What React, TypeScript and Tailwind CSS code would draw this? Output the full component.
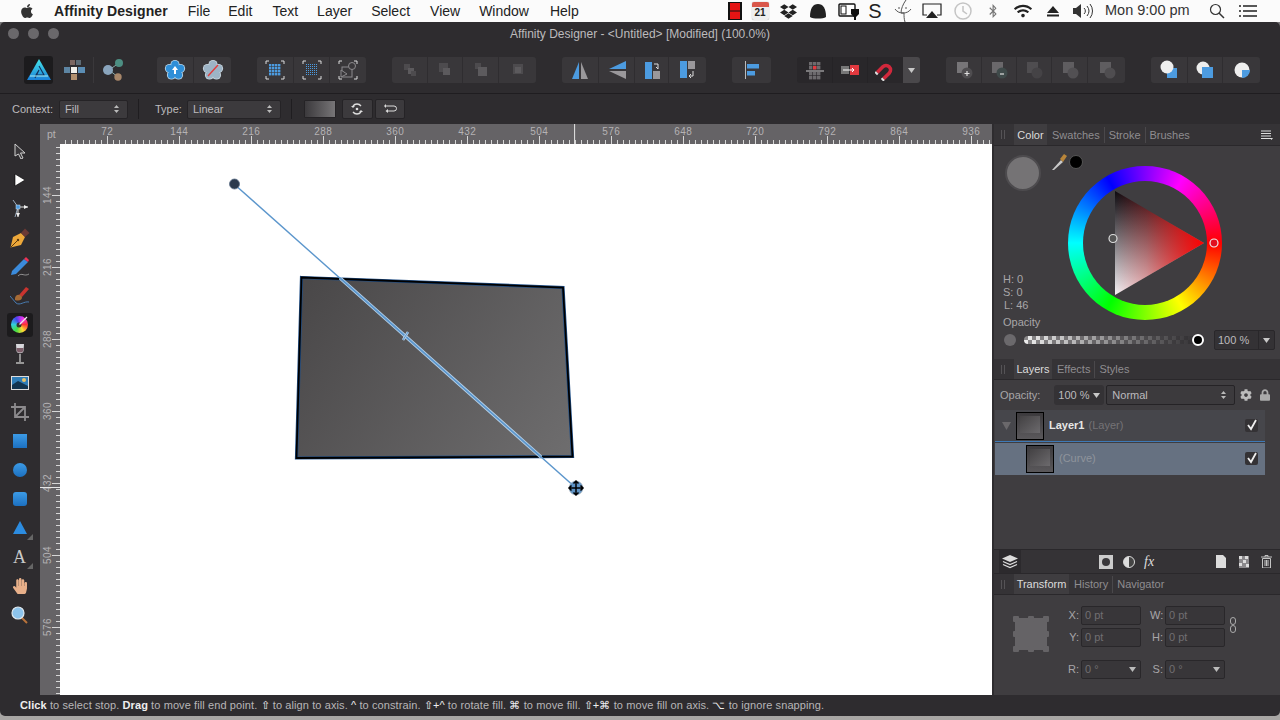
import React from "react";
import { FaApple, FaDropbox, FaWifi, FaBluetoothB, FaHandPaper, FaCog, FaLock } from "react-icons/fa";

const Sel = ({ className = "", label }: { className?: string; label: string }) => (
  <div className={"flex items-center justify-between rounded-[2px] border border-[#252326] bg-[#3c3a3d] pl-[5px] pr-[8px] text-[#bdbbbd] " + className}>
    <span>{label}</span>
    <span className="flex flex-col gap-[2px]">
      <svg width="5" height="3"><path d="M0 3L2.5 0L5 3Z" fill="#bbb" /></svg>
      <svg width="5" height="3"><path d="M0 0L2.5 3L5 0Z" fill="#bbb" /></svg>
    </span>
  </div>
);

const Caret = ({ c = "#c8c8c8" }: { c?: string }) => (
  <svg width="7" height="5"><path d="M0 0H7L3.5 5Z" fill={c} /></svg>
);

const Ico = ({ children, s = 22 }: { children: React.ReactNode; s?: number }) => (
  <svg width={s} height={s} viewBox="0 0 22 22">{children}</svg>
);

const Cell = ({ className = "", children, last }: { className?: string; children: React.ReactNode; last?: boolean }) => (
  <div className={"flex h-full items-center justify-center " + (last ? "" : "border-r border-[#2f2d30] ") + className}>{children}</div>
);

const Flower = ({ fill, stroke }: { fill: string; stroke: string }) => {
  const pts = [[11, 5.5], [16.5, 9.5], [14.5, 16], [7.5, 16], [5.5, 9.5]];
  return (
    <>
      {pts.map((p, i) => <circle key={i} cx={p[0]} cy={p[1]} r="4.6" fill={stroke} />)}
      {pts.map((p, i) => <circle key={"b" + i} cx={p[0]} cy={p[1]} r="3.7" fill={fill} />)}
      <circle cx="11" cy="11" r="5" fill={fill} />
    </>
  );
};

const Corners = () => (
  <path d="M2 5V2H5M17 2H20V5M20 17V20H17M5 20H2V17" fill="none" stroke="#ddd" strokeWidth="1" />
);

const Arrange = ({ a, b, c }: { a: [number, number, number]; b: [number, number, number]; c?: [number, number, number] }) => (
  <Ico>
    <rect x={a[0]} y={a[1]} width={a[2]} height={a[2]} fill="#4d4b4e" />
    <rect x={b[0]} y={b[1]} width={b[2]} height={b[2]} fill="#5c5a5d" />
    {c && <rect x={c[0]} y={c[1]} width={c[2]} height={c[2]} fill="#4d4b4e" />}
  </Ico>
);

const Bool = ({ sq, ci, mark }: { sq: string; ci: string; mark?: string }) => (
  <Ico>
    <rect x="4" y="3" width="11" height="11" fill={sq} />
    <circle cx="14" cy="14" r="5.5" fill={ci} />
    {mark && <path d={mark} stroke="#ddd" strokeWidth="1.2" fill="none" />}
  </Ico>
);

const Toolbar = () => (
  <div className="flex h-[50px] items-center border-b border-[#1f1d20] pl-[24px] pt-[3px]">
    <div className="flex h-[28px] w-[29px] items-center justify-center rounded-[3px] bg-[#1c1b1d]">
      <svg width="26" height="26" viewBox="0 0 26 26">
        <defs><linearGradient id="lg" x1="0" y1="0" x2="0" y2="1"><stop offset="0" stopColor="#45e6ea" /><stop offset="1" stopColor="#1a80d8" /></linearGradient></defs>
        <path d="M13 2L25 23H1Z" fill="url(#lg)" />
        <path d="M13 9L18 18H10L13 13L9 21" fill="none" stroke="#14305a" strokeWidth="1.100" />
        <path d="M4 19H22" stroke="#a9eef5" strokeWidth="1" />
      </svg>
    </div>
    <div className="ml-[11px] flex w-[22px] items-center justify-center">
      <svg width="22" height="22" viewBox="0 0 22 22">
        <rect x="6" y="1" width="5" height="5" fill="#7b6660" /><rect x="12" y="1" width="5" height="5" fill="#5c6a74" />
        <rect x="0" y="8" width="6" height="6" fill="#5d85a3" /><rect x="7" y="8" width="6" height="6" fill="#f0efe9" /><rect x="14" y="8" width="7" height="6" fill="#5b8db4" />
        <rect x="7" y="15" width="6" height="6" fill="#b18f6d" />
      </svg>
    </div>
    <div className="ml-[7px] h-[26px] w-px bg-[#3a383b]" />
    <div className="ml-[7px] flex w-[24px] items-center justify-center">
      <svg width="24" height="24" viewBox="0 0 24 24">
        <path d="M8 12L18 5M8 12L17 19" stroke="#8aa" strokeWidth="1" />
        <circle cx="7" cy="12" r="5" fill="#8aa5bd" /><circle cx="18" cy="5" r="4" fill="#4d8f83" /><circle cx="17" cy="19" r="3.7" fill="#a8876a" />
      </svg>
    </div>
    <div className="ml-[32px] flex h-[26px] w-[74px] rounded-[3px] bg-[#39373a]">
      <Cell className="w-[37px]"><Ico><Flower fill="#2f8fd8" stroke="#b9d6ea" /><path d="M11 7L14 11H12V15H10V11H8Z" fill="#fff" /></Ico></Cell>
      <Cell className="w-[37px]" last><Ico><Flower fill="#9db4c6" stroke="#c9d6df" /><path d="M6 17L16 6" stroke="#e23b3b" strokeWidth="1.4" /></Ico></Cell>
    </div>
    <div className="ml-[26px] flex h-[26px] w-[109px] rounded-[3px] bg-[#39373a]">
      <Cell className="w-[37px]"><Ico><Corners />{[5, 8, 11, 14].flatMap((x) => [5, 8, 11, 14].map((y) => <rect key={x + "-" + y} x={x} y={y} width="2.4" height="2.4" fill="#4c9be0" />))}</Ico></Cell>
      <Cell className="w-[36px]"><Ico><Corners />{[5, 7, 9, 11, 13, 15].flatMap((x) => [5, 7, 9, 11, 13, 15].map((y) => <rect key={x + "-" + y} x={x} y={y} width="1" height="1" fill="#4c9be0" />))}</Ico></Cell>
      <Cell className="w-[36px]" last><Ico><Corners /><rect x="5" y="8" width="10" height="10" fill="none" stroke="#8c8a8d" /><circle cx="15" cy="7" r="3.5" fill="#39373a" stroke="#8c8a8d" /><path d="M4 11L10 15L4 18Z" fill="#39373a" stroke="#8c8a8d" /></Ico></Cell>
    </div>
    <div className="ml-[26px] flex h-[26px] w-[144px] rounded-[3px] bg-[#39373a]">
      <Cell className="w-[36px]"><Arrange a={[5, 5, 6]} b={[9, 9, 6]} c={[12, 12, 5]} /></Cell>
      <Cell className="w-[35px]"><Arrange a={[5, 4, 9]} b={[9, 9, 7]} /></Cell>
      <Cell className="w-[36px]"><Arrange a={[5, 4, 6]} b={[8, 8, 9]} /></Cell>
      <Cell className="w-[37px]" last><Arrange a={[6, 5, 10]} b={[8, 8, 6]} /></Cell>
    </div>
    <div className="ml-[26px] flex h-[26px] w-[144px] rounded-[3px] bg-[#39373a]">
      <Cell className="w-[37px]"><Ico><path d="M10 3V20H3Z" fill="#4c9be0" /><path d="M12 3V20H19Z" fill="#9a989b" /></Ico></Cell>
      <Cell className="w-[36px]"><Ico><path d="M20 2V10H3Z" fill="#4c9be0" /><path d="M20 20V12H3Z" fill="#9a989b" /></Ico></Cell>
      <Cell className="w-[34px]"><Ico><rect x="4" y="3" width="7" height="17" fill="#4c9be0" /><rect x="12" y="12" width="7" height="8" fill="#9a989b" /><path d="M13 5H17V10M15 8L17 10" stroke="#ddd" fill="none" /></Ico></Cell>
      <Cell className="w-[37px]" last><Ico><rect x="3" y="2" width="7" height="17" fill="#4c9be0" /><rect x="11" y="2" width="7" height="8" fill="#9a989b" /><path d="M16 12V17H12M14 15L12 17L14 19" stroke="#ddd" fill="none" /></Ico></Cell>
    </div>
    <div className="ml-[26px] flex h-[26px] w-[39px] items-center justify-center rounded-[3px] bg-[#39373a]">
      <Ico><path d="M4.5 2V20" stroke="#bbb" /><rect x="6" y="5" width="12" height="4.5" fill="#4c9be0" /><rect x="6" y="12" width="8" height="4.5" fill="#4c9be0" /></Ico>
    </div>
    <div className="ml-[26px] flex h-[26px] w-[106px] rounded-l-[3px] bg-[#29272a]">
      <Cell className="w-[36px] border-[#252326]"><Ico><g fill="#6c6a6d">{[5, 9, 13].flatMap((x) => [3, 7, 13, 17].map((y) => <rect key={x + "_" + y} x={x} y={y} width="3.4" height="3.4" />))}</g><rect x="9" y="7" width="3.4" height="3.4" fill="#e2393f" /><path d="M2 12H20" stroke="#ccc" /></Ico></Cell>
      <Cell className="w-[35px] border-[#252326]"><Ico><rect x="2" y="7" width="8" height="8" fill="#777" /><rect x="11" y="6" width="9" height="10" fill="#e2393f" /><path d="M4 11H15M13 9L15 11L13 13" stroke="#fff" fill="none" /></Ico></Cell>
      <Cell className="w-[35px]" last><Ico><g transform="rotate(-135 11 11)"><path d="M6.500 3V11A4.500 4.500 0 0 0 15.500 11V3" fill="none" stroke="#d2283c" strokeWidth="3.600" /><path d="M6.500 1V3M15.500 1V3" stroke="#ddd" strokeWidth="3.600" /></g></Ico></Cell>
    </div>
    <div className="flex h-[26px] w-[17px] items-center justify-center rounded-r-[3px] bg-[#4a484b]"><Caret /></div>
    <div className="ml-[26px] flex h-[26px] w-[179px] rounded-[3px] bg-[#39373a]">
      <Cell className="w-[36px]"><Bool sq="#777578" ci="#4f4d50" mark="M11.500 14.500H16.500M14 12V17" /></Cell>
      <Cell className="w-[35px]"><Bool sq="#6a686b" ci="#3f4a4a" mark="M12 15H16" /></Cell>
      <Cell className="w-[35px]"><Bool sq="#4f4d50" ci="#454346" /></Cell>
      <Cell className="w-[36px]"><Bool sq="#5f5d60" ci="#525053" /></Cell>
      <Cell className="w-[37px]" last><Bool sq="#5f5d60" ci="#4f4d50" /></Cell>
    </div>
    <div className="ml-[26px] flex h-[26px] w-[109px] rounded-[3px] bg-[#39373a]">
      <Cell className="w-[37px]"><Ico><rect x="9" y="9" width="10" height="10" fill="#4c9be0" /><circle cx="9" cy="8" r="6.500" fill="#eee" /></Ico></Cell>
      <Cell className="w-[35px]"><Ico><circle cx="9" cy="9" r="6.500" fill="#eee" /><rect x="8" y="8" width="11" height="11" fill="#4c9be0" /></Ico></Cell>
      <Cell className="w-[37px]" last><Ico><circle cx="11" cy="11" r="7.500" fill="#eee" /><path d="M11 11H19A8 8 0 0 1 11 19Z" fill="#4c9be0" /></Ico></Cell>
    </div>
  </div>
);

const ContextBar = () => (
  <div className="flex h-[30px] items-center pl-[12px] text-[11px] text-[#bdbbbd]">
    <span>Context:</span>
    <Sel className="ml-[6px] h-[19px] w-[69px]" label="Fill" />
    <div className="ml-[10px] h-[20px] w-px bg-[#1f1d20]" />
    <span className="ml-[16px]">Type:</span>
    <Sel className="ml-[5px] h-[19px] w-[94px]" label="Linear" />
    <div className="ml-[10px] h-[20px] w-px bg-[#1f1d20]" />
    <div className="ml-[12px] h-[18px] w-[32px] rounded-[1px] border border-[#252326] bg-gradient-to-r from-[#3c3a3d] to-[#777577]" />
    <div className="ml-[6px] flex h-[20px] w-[31px] items-center justify-center rounded-[2px] border border-[#252326] bg-[#3c3a3d]">
      <svg width="14" height="14" viewBox="0 0 14 14"><path d="M3 4A5 5 0 0 1 11 4M11 10A5 5 0 0 1 3 10" fill="none" stroke="#ddd" strokeWidth="1.3" /><circle cx="7" cy="7" r="1.300" fill="#ddd" /><path d="M1 4H5L3 6ZM9 10H13L11 8Z" fill="#ddd" /></svg>
    </div>
    <div className="ml-[2px] flex h-[20px] w-[30px] items-center justify-center rounded-[2px] border border-[#252326] bg-[#3c3a3d]">
      <svg width="14" height="12" viewBox="0 0 14 12"><path d="M2 3H11A2 2 0 0 1 11 8H4" fill="none" stroke="#ddd" /><path d="M3 1V5L1 3ZM5 6V10L2.500 8Z" fill="#ddd" /></svg>
    </div>
  </div>
);

const MenuIcon = ({ className, children }: { className: string; children: React.ReactNode }) => (
  <div className={"flex items-center justify-center " + className}>{children}</div>
);

const MenuBar = () => (
  <div className="flex h-[22px] items-center bg-[#fbfbfb] text-[14px] text-[#222]">
    <MenuIcon className="ml-[19px] w-[16px]"><FaApple size={16} color="#333" /></MenuIcon>
    <span className="ml-[19px] font-bold tracking-[0.1px]">Affinity Designer</span>
    <span className="ml-[20px]">File</span>
    <span className="ml-[18px]">Edit</span>
    <span className="ml-[20px]">Text</span>
    <span className="ml-[19px]">Layer</span>
    <span className="ml-[19px]">Select</span>
    <span className="ml-[20px]">View</span>
    <span className="ml-[19px]">Window</span>
    <span className="ml-[21px]">Help</span>
    <div className="ml-auto flex items-center">
      <MenuIcon className="w-[26px]"><svg width="14" height="18" viewBox="0 0 14 18"><rect width="14" height="18" fill="#111" /><rect x="2" y="1" width="10" height="7.500" fill="#e41414" /><rect x="2" y="9.500" width="10" height="7.500" fill="#e41414" /></svg></MenuIcon>
      <MenuIcon className="w-[24px]"><div className="flex h-[18px] w-[17px] flex-col rounded-[2px] bg-[#eee] shadow-[0_0_1px_#888]"><div className="h-[5px] rounded-t-[2px] bg-[#d9574a]" /><span className="text-center text-[10px] font-bold leading-[12px] text-[#222]">21</span></div></MenuIcon>
      <MenuIcon className="w-[32px]"><FaDropbox size={17} color="#222" /></MenuIcon>
      <MenuIcon className="w-[28px]"><svg width="20" height="16" viewBox="0 0 20 16"><path d="M2 14C2 5 5 1 10 1S18 5 18 14C15 16 5 16 2 14Z" fill="#222" /></svg></MenuIcon>
      <MenuIcon className="w-[34px]"><svg width="22" height="18" viewBox="0 0 22 18"><rect x="1" y="2" width="16" height="12" rx="1" fill="#fff" stroke="#111" strokeWidth="1.400" /><rect x="3" y="4" width="5" height="8" fill="none" stroke="#111" /><path d="M13 7H21V12L18 15V18H16V15L13 12Z" fill="#111" /></svg></MenuIcon>
      <MenuIcon className="w-[18px]"><span className="text-[20px] leading-none text-[#222]">S</span></MenuIcon>
      <MenuIcon className="w-[38px]"><svg width="22" height="22" viewBox="0 0 22 22"><path d="M14 0C11 4 9 9 9 13H12C12 16 12 19 13 22M3 9C5 12 8 13 11 13S17 12 19 9M14 7V9M7 7V9" fill="none" stroke="#555" strokeWidth="1" /></svg></MenuIcon>
      <MenuIcon className="w-[20px]"><svg width="20" height="16" viewBox="0 0 20 16"><path d="M5 12H1V1H19V12H15" fill="none" stroke="#222" strokeWidth="1.200" /><path d="M10 8L16 15H4Z" fill="#222" /></svg></MenuIcon>
      <MenuIcon className="w-[42px]"><svg width="20" height="20" viewBox="0 0 20 20"><circle cx="10" cy="10" r="8" fill="none" stroke="#c4c4c4" strokeWidth="1.500" /><path d="M10 5V10L14 13" fill="none" stroke="#c4c4c4" strokeWidth="1.500" /></svg></MenuIcon>
      <MenuIcon className="w-[18px]"><FaBluetoothB size={14} color="#777" /></MenuIcon>
      <MenuIcon className="w-[42px]"><FaWifi size={18} color="#222" /></MenuIcon>
      <MenuIcon className="w-[18px]"><svg width="12" height="11" viewBox="0 0 12 11"><path d="M6 0L12 7H0Z" fill="#222" /><rect y="8.500" width="12" height="2" fill="#222" /></svg></MenuIcon>
      <MenuIcon className="w-[42px]"><svg width="22" height="16" viewBox="0 0 22 16"><path d="M1 5H4L9 1V15L4 11H1Z" fill="#333" /><path d="M12 5A4 4 0 0 1 12 11M15 3A8 8 0 0 1 15 13M18 1A11 11 0 0 1 18 15" fill="none" stroke="#333" /></svg></MenuIcon>
      <span className="ml-[1px] w-[86px] whitespace-nowrap text-[14.500px] text-[#333]">Mon 9:00 pm</span>
      <MenuIcon className="ml-[17px] w-[18px]"><svg width="16" height="16" viewBox="0 0 16 16"><circle cx="6.500" cy="6.500" r="5" fill="none" stroke="#333" strokeWidth="1.200" /><path d="M10 10L15 15" stroke="#333" strokeWidth="1.500" /></svg></MenuIcon>
      <MenuIcon className="ml-[13px] mr-[23px] w-[18px]"><svg width="18" height="12" viewBox="0 0 18 12"><path d="M4 1H18M4 6H18M4 11H18M0 1H2M0 6H2M0 11H2" stroke="#222" strokeWidth="1.500" /></svg></MenuIcon>
    </div>
  </div>
);

const Tool = ({ children, active }: { children: React.ReactNode; active?: boolean }) => (
  <div className="flex h-[29px] items-center justify-center">
    <div className={"flex h-[24px] w-[26px] items-center justify-center rounded-[3px] " + (active ? "bg-[#1c1b1d]" : "")}>{children}</div>
  </div>
);

const Tools = () => (
  <div className="flex w-[40px] shrink-0 flex-col pt-[12px] pr-[1px]">
    <Tool><svg width="14" height="16" viewBox="0 0 14 16"><path d="M2 1L12 10H7.500L10 15L8 16L5.500 11L2 13Z" fill="#3a383b" stroke="#d0d0d0" /></svg></Tool>
    <Tool><svg width="12" height="14" viewBox="0 0 12 14"><path d="M1 1L11 7L1 13Z" fill="#fff" stroke="#000" strokeWidth=".6" /></svg></Tool>
    <Tool><svg width="20" height="20" viewBox="0 0 20 20"><path d="M3 1L8 8L5 18" fill="none" stroke="#9ab" /><path d="M8 8H18" stroke="#ddd" /><path d="M8 8L8 18" stroke="#ddd" /><rect x="6" y="6" width="4" height="4" fill="#4c9be0" stroke="#cde" strokeWidth=".5" /><path d="M14 6L18 8L14 10ZM6 14L8 18L10 14Z" fill="#eee" /></svg></Tool>
    <Tool><svg width="20" height="20" viewBox="0 0 20 20"><path d="M0.500 19.500L3 9L11 5L15 9L11 17Z" fill="#eda83a" /><path d="M1 19L7.500 12.500" stroke="#5a3a10" /><circle cx="8" cy="12" r="1.200" fill="#5a3a10" /><path d="M11 5L15 0.500L19.500 5L15 9Z" fill="#6b3a35" /></svg></Tool>
    <Tool><svg width="20" height="20" viewBox="0 0 20 20"><path d="M2 14L14 2L18 5L6 17L1 18Z" fill="#3b8bdc" /><path d="M14 2L16 0L19 3L18 5Z" fill="#e35" /><path d="M8 19C12 15 14 20 19 17" fill="none" stroke="#aaa" strokeWidth=".8" /></svg></Tool>
    <Tool><svg width="20" height="20" viewBox="0 0 20 20"><path d="M9 9L16 1L19 3L12 11Z" fill="#c9342f" /><path d="M5 12C6 8 10 8 12 11C12 15 8 15 5 14Z" fill="#a56a35" /><path d="M0 10L6 17C10 20 14 15 19 16" fill="none" stroke="#4c84c0" strokeWidth=".9" /></svg></Tool>
    <Tool active><div className="relative h-[17px] w-[17px] rounded-full bg-[conic-gradient(from_90deg,#f33,#fd3,#4d4,#3cd,#44e,#e3e,#f33)]"><svg className="absolute left-0 top-0" width="17" height="17" viewBox="0 0 17 17"><circle cx="8" cy="9" r="2.500" fill="#333" /><path d="M8.500 8.500L16 1" stroke="#eee" strokeWidth="1.200" /></svg></div></Tool>
    <Tool><svg width="12" height="22" viewBox="0 0 12 22"><path d="M2 1H10L9.500 8C9 11 3 11 2.500 8Z" fill="#d8d8dc" /><path d="M6 11V19M2 20H10" stroke="#bbb" strokeWidth="1.400" /><path d="M2.500 5H9.500L9 8C8.500 10 3.500 10 3 8Z" fill="#7d5e6a" /></svg></Tool>
    <Tool><svg width="18" height="14" viewBox="0 0 18 14"><rect width="18" height="14" fill="#ddd" /><rect x="1" y="1" width="16" height="12" fill="#2f7db8" /><path d="M1 9L7 5L17 10V13H1Z" fill="#12344f" /><circle cx="13" cy="4" r="2" fill="#e9c46a" /></svg></Tool>
    <Tool><svg width="18" height="18" viewBox="0 0 18 18"><path d="M4 0V14H18M0 4H14V18M4 14L14 4" fill="none" stroke="#8c8a8d" strokeWidth="1.800" /></svg></Tool>
    <Tool><div className="h-[14px] w-[14px] bg-gradient-to-b from-[#3c9be6] to-[#1c70c0]" /></Tool>
    <Tool><div className="h-[14px] w-[14px] rounded-full bg-gradient-to-b from-[#3c9be6] to-[#1c70c0]" /></Tool>
    <Tool><div className="h-[14px] w-[14px] rounded-[3px] bg-gradient-to-b from-[#3c9be6] to-[#1c70c0]" /></Tool>
    <Tool><div className="relative flex h-[24px] w-[26px] items-center justify-center"><svg width="14" height="13" viewBox="0 0 14 13"><path d="M7 0L14 13H0Z" fill="#2c8ce0" /></svg><svg className="absolute bottom-0 right-0" width="6" height="6"><path d="M6 0V6H0Z" fill="#666" /></svg></div></Tool>
    <Tool><div className="relative flex h-[24px] w-[26px] items-center justify-center"><span className="font-['Liberation_Serif',serif] text-[18px] leading-none text-[#c9c9c9]">A</span><svg className="absolute bottom-0 right-0" width="6" height="6"><path d="M6 0V6H0Z" fill="#666" /></svg></div></Tool>
    <Tool><FaHandPaper size={16} color="#e8b08a" /></Tool>
    <Tool><svg width="17" height="18" viewBox="0 0 17 18"><path d="M10 11L16 17" stroke="#b9733a" strokeWidth="2" /><circle cx="7" cy="7" r="6" fill="#8dc4ec" stroke="#dfe8ee" strokeWidth="1.200" /></svg></Tool>
  </div>
);

const TopRuler = () => {
  const xs: number[] = [];
  for (let x = -4.7 + 6; x < 952; x += 6) xs.push(x);
  const labels = [72, 144, 216, 288, 360, 432, 504, 576, 648, 720, 792, 864, 936];
  return (
    <svg width="952" height="20" className="block shrink-0 bg-[#656366]">
      {xs.map((x, i) => {
        if (x < 20) return null;
        const major = (i + 1) % 12 === 0;
        return <line key={i} x1={Math.round(x) + 0.5} x2={Math.round(x) + 0.5} y1={major ? 12 : 16} y2={20} stroke="#d6d6d6" strokeWidth="1" />;
      })}
      {labels.map((l) => (
        <text key={l} x={l - 4.7} y={11} textAnchor="middle" fontSize="10" letterSpacing=".4" fill="#b4b2b4" fontFamily="Liberation Sans, sans-serif">{l}</text>
      ))}
      <text x="7" y="14" fontSize="10.500" fill="#b4b2b4" fontFamily="Liberation Sans, sans-serif">pt</text>
      <line x1="534.6" x2="534.6" y1="0" y2="20" stroke="#e6e6e6" />
    </svg>
  );
};

const LeftRuler = () => {
  const ys: number[] = [];
  for (let y = -93 + 6; y < 551; y += 6) ys.push(y);
  const labels = [144, 216, 288, 360, 432, 504, 576];
  return (
    <svg width="20" height="551" className="block shrink-0 bg-[#656366]">
      {ys.map((y, i) => {
        if (y < 0) return null;
        const major = (i + 1) % 12 === 0;
        return <line key={i} y1={Math.round(y) + 0.5} y2={Math.round(y) + 0.5} x1={major ? 12 : 16} x2={20} stroke="#d6d6d6" strokeWidth="1" />;
      })}
      {labels.map((l) => {
        const y = l - 93;
        return <text key={l} x={0} y={0} transform={`translate(11 ${y}) rotate(-90)`} textAnchor="middle" fontSize="10" letterSpacing=".4" fill="#b4b2b4" fontFamily="Liberation Sans, sans-serif">{l}</text>;
      })}
      <line x1="0" x2="20" y1="343.500" y2="343.500" stroke="#e6e6e6" />
    </svg>
  );
};

const Canvas = () => (
  <div className="relative h-[551px] flex-1 bg-white">
    <svg width="932" height="551" className="absolute left-0 top-0" viewBox="60 144 932 551">
      <defs>
        <linearGradient id="sg" gradientUnits="userSpaceOnUse" x1="310" y1="280" x2="565" y2="460">
          <stop offset="0" stopColor="#4a4849" />
          <stop offset="1" stopColor="#6e6d6e" />
        </linearGradient>
      </defs>
      <path d="M301.500 277.500L563 287.500L572.500 456.500L296.500 458Z" fill="url(#sg)" stroke="#1e4d86" strokeWidth="3.200" />
      <path d="M301.500 277.500L563 287.500L572.500 456.500L296.500 458Z" fill="none" stroke="#000" strokeWidth="1.800" />
      <line x1="234" y1="184" x2="576" y2="488" stroke="#5c96cc" strokeWidth="1.400" />
      <line x1="340" y1="278" x2="541" y2="457" stroke="#b9d3ea" strokeWidth="3.500" />
      <line x1="340" y1="278" x2="541" y2="457" stroke="#5c96cc" strokeWidth="1.800" />
      <path d="M403 340L408 332" stroke="#b9d3ea" strokeWidth="2.500" />
      <path d="M403 340L408 332" stroke="#5c96cc" strokeWidth="1" />
      <circle cx="234.500" cy="184" r="5" fill="#2b3a4e" stroke="#5c6f86" strokeWidth=".8" />
      <circle cx="576" cy="488" r="7" fill="#5f93c4" stroke="#bbb" strokeWidth=".6" />
      <path d="M576 481V495M569 488H583M573.500 483.500L576 481L578.500 483.500M573.500 492.500L576 495L578.500 492.500M571.500 485.500L569 488L571.500 490.500M580.500 485.500L583 488L580.500 490.500" fill="none" stroke="#000" strokeWidth="1.500" />
    </svg>
  </div>
);

const TabStrip = ({ tabs, active, activeW, right, h = "h-[21px]" }: { tabs: string[]; active: string; activeW: string; right?: boolean; h?: string }) => (
  <div className={"flex items-stretch border-b border-[#2a282b] bg-[#353336] text-[11px] " + h}>
    <div className="flex w-[20px] items-center pl-[7px]"><div className="h-[9px] w-[4px] border-x border-[#555356]" /></div>
    {tabs.map((t, i) => (
      <div key={t} className={t === active ? "flex items-center justify-center bg-[#3f3d40] pt-[1px] text-[#dcdcdc] " + activeW : "flex items-center pt-[1px]"}>
        {t === active ? t : (
          <span className={i > 1 ? "border-l border-[#4a484b] px-[4px] text-[#8f8d90]" : "pl-[5px] pr-[4px] text-[#8f8d90]"}>{t}</span>
        )}
      </div>
    ))}
    {right && (
      <div className="ml-auto flex items-center pr-[7px]">
        <svg width="12" height="10" viewBox="0 0 12 10"><path d="M0 1H10M0 3.500H10M0 6H10M0 8.500H10" stroke="#ddd" /><path d="M9 8H12L10.500 10Z" fill="#ddd" /></svg>
      </div>
    )}
  </div>
);

const ColorPanel = () => (
  <div className="h-[213px] bg-[#3f3d40]">
    <div className="flex h-[166px]">
      <div className="flex w-[74px] flex-col pl-[11px]">
        <div className="flex pt-[9px]">
          <div className="h-[36px] w-[36px] rounded-full border-[2px] border-[#4d4b4e] bg-[#757375]" />
        </div>
        <div className="-ml-[2px] mt-auto flex flex-col text-[11px] leading-[13px] text-[#a8a6a8]">
          <span>H: 0</span><span>S: 0</span><span className="pl-[1px]">L: 46</span>
        </div>
      </div>
      <div className="relative w-[154px] pt-[20px]">
        <div className="absolute -left-[17px] top-[7px] flex items-center">
          <svg width="16" height="18" viewBox="0 0 16 18"><path d="M1 17L10 7L12 9L3 17Z" fill="#c9c9c9" /><path d="M9 6L13 1L16 3L12 9Z" fill="#b8853a" /></svg>
          <div className="ml-[2px] h-[14px] w-[14px] rounded-full border border-[#555] bg-black" />
        </div>
        <div className="relative h-[154px] w-[154px] rounded-full bg-[conic-gradient(from_90deg,#ff0000,#ffff00,#00ff00,#00ffff,#0000ff,#ff00ff,#ff0000)]">
          <div className="absolute left-[15px] top-[15px] h-[124px] w-[124px] rounded-full bg-[#3f3d40]" />
          <svg className="absolute left-0 top-0" width="154" height="154">
            <defs>
              <linearGradient id="tv" x1="0" y1="0" x2="0" y2="1"><stop offset="0" stopColor="#0c0a0f" /><stop offset="1" stopColor="#f4f2f6" /></linearGradient>
              <linearGradient id="tr" x1="0" y1="0" x2="1" y2="0"><stop offset="0" stopColor="#ff0000" stopOpacity="0" /><stop offset=".35" stopColor="#ee0000" stopOpacity=".25" /><stop offset="1" stopColor="#ff0000" /></linearGradient>
            </defs>
            <path d="M47 25V129L136 77Z" fill="url(#tv)" />
            <path d="M47 25V129L136 77Z" fill="url(#tr)" />
            <circle cx="45" cy="72.500" r="4" fill="#555" stroke="#ddd" strokeWidth="1.200" />
            <circle cx="146" cy="77" r="4" fill="#e01020" stroke="#eee" strokeWidth="1.200" />
          </svg>
        </div>
      </div>
    </div>
    <div className="pl-[9px] pt-[4px] text-[11px] leading-[13px] text-[#a8a6a8]">Opacity</div>
    <div className="flex items-center pl-[10px] pt-[1px]">
      <div className="h-[12px] w-[12px] rounded-full bg-[#6b696c]" />
      <div className="relative ml-[8px] h-[8px] w-[175px] rounded-full bg-[repeating-conic-gradient(#eeeeee_0_25%,#8a888a_0_50%)] bg-[length:8px_8px]">
        <div className="h-full rounded-full bg-gradient-to-r from-transparent to-[#302e31]" />
        <div className="absolute -right-[5px] -top-[2px] h-[12px] w-[12px] rounded-full border-[2px] border-white bg-black" />
      </div>
      <div className="ml-[15px] flex h-[20px] w-[61px] items-center rounded-[2px] border border-[#29272a] bg-[#343235] text-[11px] text-[#bdbbbd]">
        <span className="w-[43px] pl-[3px]">100 %</span>
        <span className="flex h-full flex-1 items-center justify-center border-l border-[#29272a]"><Caret /></span>
      </div>
    </div>
  </div>
);

const Check = () => (
  <div className="flex h-[13px] w-[13px] items-center justify-center rounded-[2px] bg-[#343235]">
    <svg width="13" height="13" viewBox="0 0 13 13"><path d="M3 6L6 10L11 1" fill="none" stroke="#eee" strokeWidth="1.800" /></svg>
  </div>
);

const Thumb = () => (
  <div className="h-[28px] w-[28px] border border-black bg-gradient-to-b from-[#3c3a3d] to-[#5a585b] p-[3px]">
    <div className="h-[17px] bg-gradient-to-br from-[#444244] to-[#6c6a6d]" />
  </div>
);

const LayersPanel = () => (
  <div className="flex h-[169px] flex-col bg-[#3f3d40] text-[11px]">
    <div className="flex h-[30px] items-center pl-[6px] text-[#a8a6a8]">
      <span>Opacity:</span>
      <div className="ml-[14px] flex h-[20px] w-[50px] items-center justify-between rounded-[3px] bg-[#343235] pl-[4px] pr-[4px] text-[#bdbbbd]"><span>100 %</span><Caret /></div>
      <Sel className="ml-[2px] h-[20px] w-[129px]" label="Normal" />
      <div className="ml-[5px] flex w-[12px] justify-center"><FaCog size={12} color="#bbb" /></div>
      <div className="ml-[8px] flex w-[10px] justify-center"><FaLock size={12} color="#aaa" /></div>
    </div>
    <div className="ml-[1px] flex w-[270px] flex-col">
      <div className="flex h-[32px] items-center border-b-[1px] border-[#3d7ab8] bg-[#46464b]">
        <svg className="ml-[7px]" width="9" height="8"><path d="M0 0H9L4.500 8Z" fill="#6a686b" /></svg>
        <div className="ml-[5px]"><Thumb /></div>
        <span className="ml-[5px] font-bold text-[#e6e6e6]">Layer1</span>
        <span className="ml-[4px] text-[#757376]">(Layer)</span>
        <div className="ml-auto mr-[7px]"><Check /></div>
      </div>
      <div className="mt-[1px] flex h-[32px] items-center bg-[#667181] pb-[1px]">
        <div className="ml-[31px]"><Thumb /></div>
        <span className="ml-[5px] text-[#8f949c]">(Curve)</span>
        <div className="ml-auto mr-[7px]"><Check /></div>
      </div>
    </div>
  </div>
);

const LayersFooter = () => (
  <div className="flex h-[25px] items-center border-y border-[#2a282b] bg-[#353336]">
    <div className="ml-[5px] flex h-[23px] w-[22px] items-center justify-center bg-[#2c2a2d]">
      <svg width="16" height="14" viewBox="0 0 16 14"><path d="M8 0L16 3.500L8 7L0 3.500Z" fill="#ddd" /><path d="M1 6.500L8 9.500L15 6.500M1 9.500L8 12.500L15 9.500" fill="none" stroke="#ddd" strokeWidth="1.200" /></svg>
    </div>
    <div className="ml-[78px] flex h-[14px] w-[14px] items-center justify-center bg-[#ccc]"><div className="h-[8px] w-[8px] rounded-full bg-[#3a383b]" /></div>
    <div className="ml-[10px] h-[12px] w-[12px] rounded-full border border-[#ddd] bg-gradient-to-r from-[#ddd] from-50% to-[#444] to-50%" />
    <span className="ml-[9px] font-['Liberation_Serif',serif] text-[14px] italic leading-none text-[#ddd]">fx</span>
    <svg className="ml-[62px]" width="10" height="13" viewBox="0 0 10 13"><path d="M0 0H7L10 3V13H0Z" fill="#ddd" /></svg>
    <svg className="ml-[12px]" width="11" height="13" viewBox="0 0 11 13"><rect x="1" y="1" width="10" height="12" fill="#8b898c" /><path d="M1 1H4V4H1ZM5 5H8V8H5ZM1 8H4V11H1ZM7 1H10V4H7ZM8 9H11V12H8Z" fill="#ddd" /></svg>
    <svg className="ml-[12px]" width="11" height="13" viewBox="0 0 11 13"><path d="M0 2H11M4 2V0.500H7V2M1.500 3.500H9.500V13H1.500ZM4 5V11M5.500 5V11M7 5V11" fill="none" stroke="#c4c4c4" /></svg>
  </div>
);

const Field = ({ label, className = "", value, arrow }: { label: string; className?: string; value: string; arrow?: boolean }) => (
  <div className={"flex items-center " + className}>
    <span className="w-[13px] text-right text-[#a8a6a8]">{label}</span>
    <div className="ml-[2px] flex h-[19px] w-[60px] items-center justify-between rounded-[2px] border border-[#29272a] bg-[#383639] pl-[3px] pr-[4px] text-[#716f72]">
      <span>{value}</span>
      {arrow && <Caret c="#bbb" />}
    </div>
  </div>
);

const TransformPanel = () => (
  <div className="flex h-[100px] bg-[#3f3d40] pl-[18px] text-[11px]">
    <div className="mt-[20px] h-[38px] w-[38px] shrink-0">
      <svg width="38" height="38" viewBox="0 0 38 38">
        <rect x="3" y="3" width="32" height="32" fill="#656366" />
        {[[1, 1], [16, 1], [31, 1], [1, 16], [31, 16], [1, 31], [16, 31], [31, 31]].map((p, i) => <rect key={i} x={p[0]} y={p[1]} width="6" height="6" rx="1" fill="#656366" />)}
      </svg>
    </div>
    <div className="ml-[16px] flex flex-col pt-[11px]">
      <div className="flex gap-[9px]"><Field label="X:" value="0 pt" /><Field label="W:" value="0 pt" /></div>
      <div className="mt-[3px] flex gap-[9px]"><Field label="Y:" value="0 pt" /><Field label="H:" value="0 pt" /></div>
      <div className="mt-[13px] flex gap-[9px]"><Field label="R:" value="0 °" arrow /><Field label="S:" value="0 °" arrow /></div>
    </div>
    <div className="ml-[5px] mt-[22px]"><svg width="6" height="16" viewBox="0 0 6 16"><rect x=".5" y=".5" width="5" height="7" rx="2.500" fill="none" stroke="#aaa" /><rect x=".5" y="8.500" width="5" height="7" rx="2.500" fill="none" stroke="#aaa" /></svg></div>
  </div>
);

const StatusBar = () => (
  <div className="flex h-[21px] items-center pl-[20px] text-[11px] tracking-[0.1px] text-[#b8b6b8]">
    <b className="text-[#eee]">Click</b>&nbsp;to select stop.&nbsp;<b className="text-[#eee]">Drag</b>&nbsp;to move fill end point.&nbsp;<span className="text-[#eee]">⇧</span>&nbsp;to align to axis.&nbsp;<span className="text-[#eee]">^</span>&nbsp;to constrain.&nbsp;<span className="text-[#eee]">⇧+^</span>&nbsp;to rotate fill.&nbsp;<span className="text-[#eee]">⌘</span>&nbsp;to move fill.&nbsp;<span className="text-[#eee]">⇧+⌘</span>&nbsp;to move fill on axis.&nbsp;<span className="text-[#eee]">⌥</span>&nbsp;to ignore snapping.
  </div>
);

export default function App() {
  return (
    <div className="flex h-[720px] w-[1280px] flex-col overflow-hidden bg-gradient-to-b from-[#777577] to-[#a8a6a4] font-['Liberation_Sans',sans-serif]">
      <MenuBar />
      <div className="flex h-[694px] flex-col rounded-[5px] bg-[#2e2c2f]">
        <div className="relative flex h-[22px] items-center justify-center pt-[1px] text-[12px] text-[#bdbbbd]">
          <div className="absolute left-[8px] top-[6px] flex gap-[9px]">
            <div className="h-[11px] w-[11px] rounded-full bg-[#6a686b]" />
            <div className="h-[11px] w-[11px] rounded-full bg-[#6a686b]" />
            <div className="h-[11px] w-[11px] rounded-full bg-[#6a686b]" />
          </div>
          Affinity Designer - &lt;Untitled&gt; [Modified] (100.0%)
        </div>
        <Toolbar />
        <ContextBar />
        <div className="flex h-[571px]">
          <Tools />
          <div className="flex w-[952px] shrink-0 flex-col">
            <TopRuler />
            <div className="flex">
              <LeftRuler />
              <Canvas />
            </div>
          </div>
          <div className="flex w-[288px] flex-col border-l-[2px] border-[#2e2c2f]">
            <TabStrip h="h-[22px]" tabs={["Color", "Swatches", "Stroke", "Brushes"]} active="Color" activeW="w-[33px]" right />
            <ColorPanel />
            <TabStrip tabs={["Layers", "Effects", "Styles"]} active="Layers" activeW="w-[38px]" />
            <LayersPanel />
            <LayersFooter />
            <TabStrip tabs={["Transform", "History", "Navigator"]} active="Transform" activeW="w-[55px]" />
            <TransformPanel />
          </div>
        </div>
        <StatusBar />
      </div>
    </div>
  );
}
